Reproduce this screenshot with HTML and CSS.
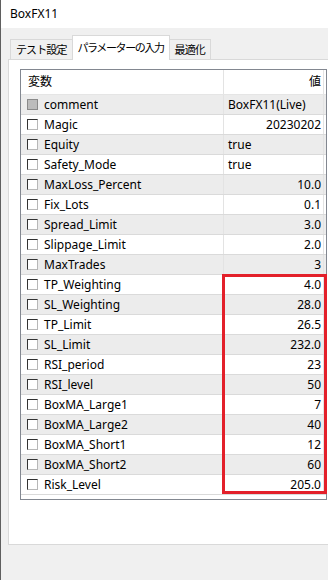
FILE: index.html
```html
<!DOCTYPE html>
<html lang="ja">
<head>
    <meta charset="UTF-8">
    <meta name="viewport" content="width=device-width, initial-scale=1.0" />
    <title>BoxFX11</title>
    <link rel="stylesheet" href="styles.css">
</head>
<body>
    <div class="window">
        <div class="titlebar">BoxFX11</div>
        <div class="content">
            <div class="tabs">
                <div class="tab">テスト設定</div>
                <div class="tab active">パラメーターの入力</div>
                <div class="tab">最適化</div>
            </div>
            <div class="panel">
                <div class="grid">
                    <div class="head">
                        <div class="name">変数</div>
                        <div class="val">値</div>
                    </div>
                    <div class="row"><div class="name"><span class="check disabled"></span>comment</div><div class="val left">BoxFX11(Live)</div></div>
                    <div class="row"><div class="name"><span class="check"></span>Magic</div><div class="val">20230202</div></div>
                    <div class="row"><div class="name"><span class="check"></span>Equity</div><div class="val left">true</div></div>
                    <div class="row"><div class="name"><span class="check"></span>Safety_Mode</div><div class="val left">true</div></div>
                    <div class="row"><div class="name"><span class="check"></span>MaxLoss_Percent</div><div class="val">10.0</div></div>
                    <div class="row"><div class="name"><span class="check"></span>Fix_Lots</div><div class="val">0.1</div></div>
                    <div class="row"><div class="name"><span class="check"></span>Spread_Limit</div><div class="val">3.0</div></div>
                    <div class="row"><div class="name"><span class="check"></span>Slippage_Limit</div><div class="val">2.0</div></div>
                    <div class="row"><div class="name"><span class="check"></span>MaxTrades</div><div class="val">3</div></div>
                    <div class="row"><div class="name"><span class="check"></span>TP_Weighting</div><div class="val">4.0</div></div>
                    <div class="row"><div class="name"><span class="check"></span>SL_Weighting</div><div class="val">28.0</div></div>
                    <div class="row"><div class="name"><span class="check"></span>TP_Limit</div><div class="val">26.5</div></div>
                    <div class="row"><div class="name"><span class="check"></span>SL_Limit</div><div class="val">232.0</div></div>
                    <div class="row"><div class="name"><span class="check"></span>RSI_period</div><div class="val">23</div></div>
                    <div class="row"><div class="name"><span class="check"></span>RSI_level</div><div class="val">50</div></div>
                    <div class="row"><div class="name"><span class="check"></span>BoxMA_Large1</div><div class="val">7</div></div>
                    <div class="row"><div class="name"><span class="check"></span>BoxMA_Large2</div><div class="val">40</div></div>
                    <div class="row"><div class="name"><span class="check"></span>BoxMA_Short1</div><div class="val">12</div></div>
                    <div class="row"><div class="name"><span class="check"></span>BoxMA_Short2</div><div class="val">60</div></div>
                    <div class="row"><div class="name"><span class="check"></span>Risk_Level</div><div class="val">205.0</div></div>
                </div>
                <div class="highlight"></div>
            </div>
        </div>
    </div>
</body>
</html>
```

FILE: styles.css
```css
html, body {margin: 0; padding: 0; height: 100%;}
body {
    font-family: "Noto Sans", "Noto Sans CJK JP", sans-serif;
    font-size: 12px;
    color: #000;
    background: #f0f0f0;
    overflow: hidden;
}
.window {height: 100%; border-left: 1px solid #5f5f5f; display: flex; flex-direction: column;}
.titlebar {height: 28px; line-height: 28px; padding-left: 9px; background: #fff; font-size: 12px;}
.content {flex: 1; padding-left: 7px;}

.tabs {display: flex; align-items: flex-end; height: 31px; padding-left: 2px; position: relative; z-index: 1;}
.tab {
    height: 19px; line-height: 19px; padding: 0 5px;
    border: 1px solid #d9d9d9; border-bottom: none; background: #f0f0f0;
    font-family: "Noto Sans CJK JP", sans-serif; font-size: 11px; letter-spacing: -0.9px;
}
.tab + .tab {margin-left: -1px;}
.tab.active {height: 24px; line-height: 22px; margin-bottom: -1px; background: #fff; padding: 0 5px; letter-spacing: -1.4px;}

.panel {
    position: relative;
    width: 320px; height: 486px; box-sizing: border-box;
    background: #fff; border: 1px solid #d9d9d9; border-right: none;
    padding: 9px 0 0 11px;
}
.grid {width: 307px; box-sizing: border-box; border: 1px solid #828790; padding-bottom: 4px;}
.head, .row {display: flex; height: 20px; box-sizing: border-box; border-bottom: 1px solid #dadada;}
.head {height: 25px; line-height: 24px; border-bottom-color: #e5e5e5;}
.row:nth-child(even) {background: #ececec;}
.name {width: 203px; border-right: 1px solid #e3e3e3; display: flex; align-items: center; padding-left: 6px; box-sizing: border-box; white-space: nowrap;}
.head .name {padding-left: 7px;}
.val {width: 100px; border-right: 1px solid #e3e3e3; text-align: right; padding-right: 2px; box-sizing: border-box; line-height: 19px; white-space: nowrap;}
.head .val {line-height: 24px;}
.val.left {text-align: left; padding-left: 4px;}

.check {
    width: 11px; height: 11px; box-sizing: border-box; margin-right: 6px;
    border-top: 1px solid #333; border-left: 1px solid #333;
    border-right: 1px solid #b8b8b8; border-bottom: 1px solid #b8b8b8;
    background: #fff;
}
.check.disabled {background: #bcbcbc; border-color: #8a8a8a;}

.highlight {
    position: absolute; left: 213px; top: 214px;
    width: 105px; height: 220px; box-sizing: border-box;
    border: 3px solid #e3202a;
}
```
